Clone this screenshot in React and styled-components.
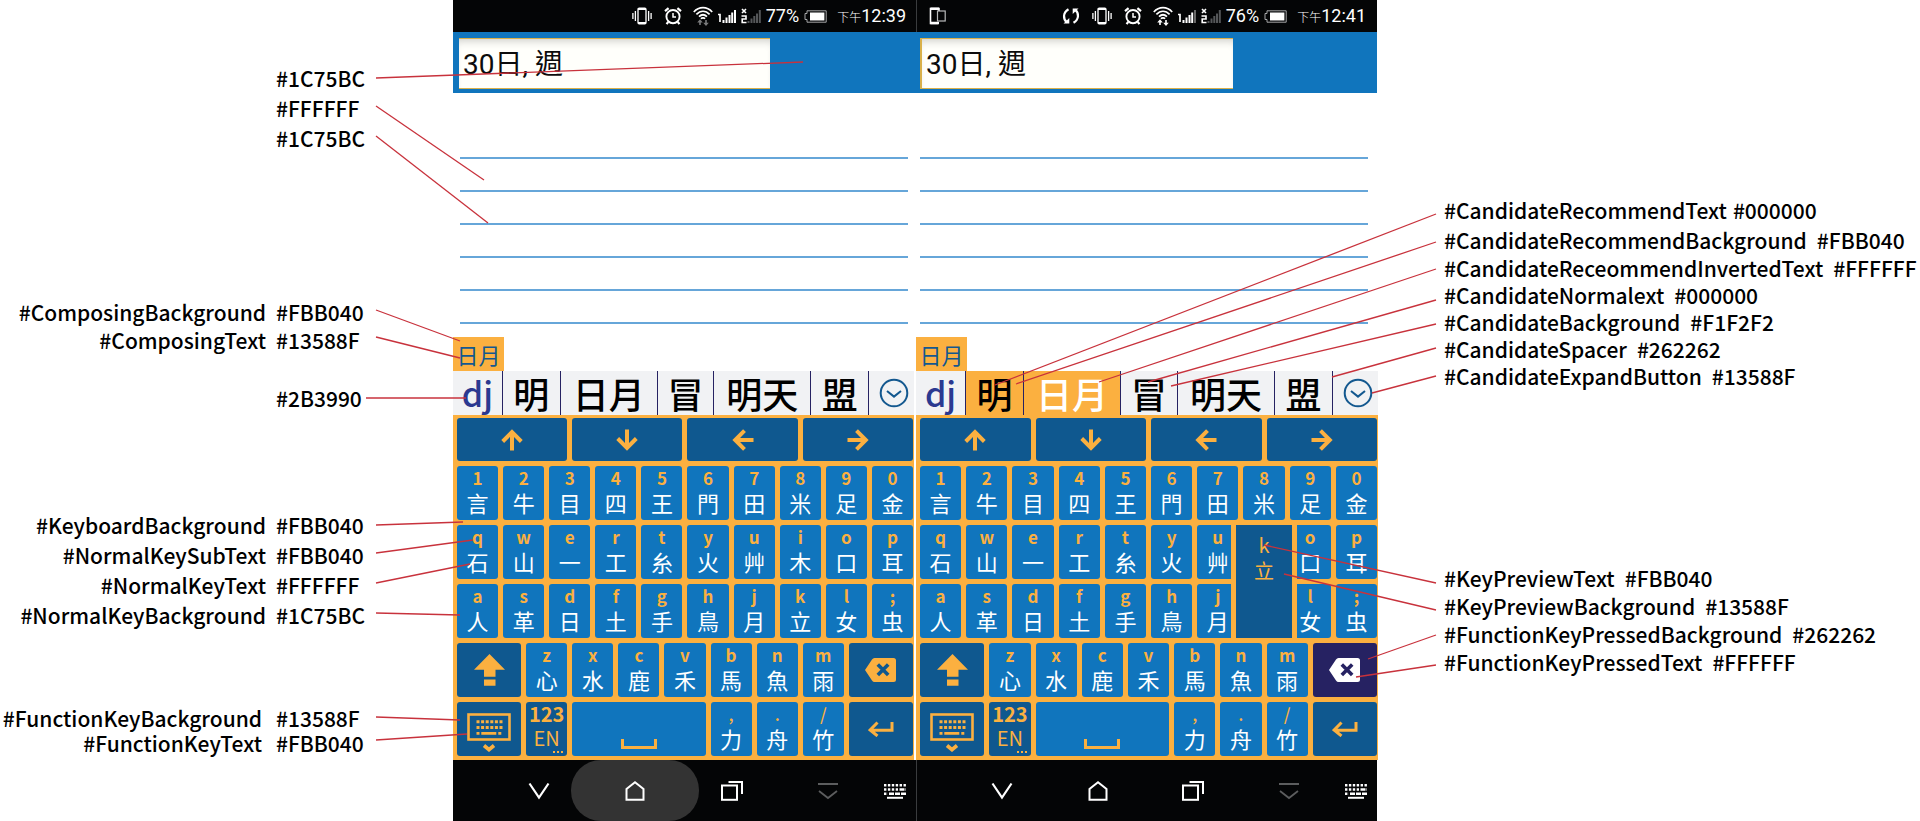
import React from "react";
import styled, { createGlobalStyle, css } from "styled-components";

const c = {
  amber: "#FBB040",
  blue: "#1075BD",
  navy: "#0F588F",
  ink: "#2B3990",
  pressed: "#262262",
  bar: "#F1F2F4",
  nav: "#040506",
};

const latin = '"Noto Sans CJK TC", "Noto Sans", sans-serif';
const android = 'Roboto, "Noto Sans CJK TC", sans-serif';

const GlobalStyle = createGlobalStyle`
  *, *::before, *::after { box-sizing: border-box; }
  body { margin: 0; background: #fff; font-family: ${latin}; }
  button, input { margin: 0; padding: 0; border: 0; font: inherit; color: inherit; background: none; }
  button { cursor: pointer; }
  svg { display: block; flex: none; }
`;

const Page = styled.main`
  position: relative;
  display: grid;
  grid-template-columns: minmax(0, 453fr) minmax(0, 463fr) minmax(0, 462fr) minmax(0, 542fr);
  overflow: hidden;
`;

/* ---------- annotations ---------- */

const Notes = styled.section`
  padding: ${(p) => (p.$side === "left" ? "63px 87px 0 0" : "195px 0 0 66px")};
  font-size: 21px;
  font-weight: 500;
  color: #000;
  white-space: nowrap;
`;

const NoteGroup = styled.div`
  margin-top: ${(p) => p.$space || 0}px;
`;

const Note = styled.div`
  display: flex;
  gap: ${(p) => p.$gap || 10}px;
  justify-content: ${(p) => (p.$side === "left" ? "flex-end" : "flex-start")};
  line-height: ${(p) => p.$pitch}px;
`;

const NoteValue = styled.span`
  ${(p) => p.$side === "left" && css`width: 90px;`}
`;

const Leaders = styled.svg`
  position: absolute;
  inset: 0;
  width: 100%;
  height: 100%;
  pointer-events: none;
  z-index: 5;

  line {
    stroke: #c8323c;
    stroke-width: 1.3;
    vector-effect: non-scaling-stroke;
  }
`;

const leftNotes = [
  { space: 0, pitch: 30, rows: [["", "#1C75BC"], ["", "#FFFFFF"], ["", "#1C75BC"]] },
  { space: 145, pitch: 28, rows: [["#ComposingBackground", "#FBB040"], ["#ComposingText", "#13588F"]] },
  { space: 30, pitch: 28, rows: [["", "#2B3990"]] },
  {
    space: 98,
    pitch: 30,
    rows: [
      ["#KeyboardBackground", "#FBB040"],
      ["#NormalKeySubText", "#FBB040"],
      ["#NormalKeyText", "#FFFFFF"],
      ["#NormalKeyBackground", "#1C75BC"],
    ],
  },
  {
    space: 76,
    pitch: 25,
    gap: 14,
    rows: [["#FunctionKeyBackground", "#13588F"], ["#FunctionKeyText", "#FBB040"]],
  },
];

const rightNotes = [
  { space: 0, pitch: 30, gap: 6, rows: [["#CandidateRecommendText", "#000000"]] },
  { space: 0, pitch: 30, rows: [["#CandidateRecommendBackground", "#FBB040"]] },
  {
    space: 0,
    pitch: 27,
    rows: [
      ["#CandidateReceommendInvertedText", "#FFFFFF"],
      ["#CandidateNormalext", "#000000"],
      ["#CandidateBackground", "#F1F2F2"],
      ["#CandidateSpacer", "#262262"],
      ["#CandidateExpandButton", "#13588F"],
    ],
  },
  {
    space: 174,
    pitch: 28,
    rows: [
      ["#KeyPreviewText", "#FBB040"],
      ["#KeyPreviewBackground", "#13588F"],
      ["#FunctionKeyPressedBackground", "#262262"],
      ["#FunctionKeyPressedText", "#FFFFFF"],
    ],
  },
];

const leaders = [
  [376, 78, 803, 62],
  [376, 106, 484, 180],
  [376, 136, 488, 223],
  [376, 310, 460, 341],
  [376, 337, 460, 358],
  [366, 398, 466, 398],
  [376, 525, 463, 522],
  [376, 553, 473, 540],
  [376, 583, 470, 564],
  [376, 613, 460, 615],
  [376, 717, 460, 720],
  [376, 740, 467, 734],
  [1436, 214, 995, 385],
  [1436, 242, 1016, 384],
  [1436, 269, 1099, 382],
  [1436, 300, 1148, 382],
  [1436, 324, 1171, 386],
  [1436, 348, 1332, 377],
  [1436, 376, 1372, 393],
  [1436, 583, 1264, 545],
  [1436, 610, 1284, 574],
  [1436, 635, 1368, 659],
  [1436, 665, 1356, 677],
];

function NoteColumn({ side, groups }) {
  return (
    <Notes $side={side}>
      {groups.map((g, i) => (
        <NoteGroup key={i} $space={g.space}>
          {g.rows.map(([name, value], j) => (
            <Note key={j} $side={side} $pitch={g.pitch} $gap={g.gap}>
              {name && <span>{name}</span>}
              <NoteValue $side={side}>{value}</NoteValue>
            </Note>
          ))}
        </NoteGroup>
      ))}
    </Notes>
  );
}

/* ---------- phone ---------- */

const Phone = styled.section`
  display: flex;
  flex-direction: column;
  min-width: 0;
`;

const StatusBar = styled.div`
  display: flex;
  align-items: center;
  height: 32px;
  padding: 0 ${(p) => (p.$second ? 11 : 10)}px 0 12px;
  margin-right: ${(p) => (p.$second ? 1 : 0)}px;
  border-left: 1px solid ${(p) => (p.$second ? "#3a3c3e" : c.nav)};
  background: ${c.nav};
  color: #fff;
  font-family: ${android};
  font-size: 18px;
  line-height: 32px;
`;

const StatusIcons = styled.div`
  display: flex;
  align-items: center;
  gap: 12px;
  margin-left: auto;
`;

const StatusSignals = styled.div`
  display: flex;
  align-items: center;
  gap: 5px;
  margin: 0 10px 0 11px;
`;

const Meridiem = styled.span`
  font-size: 12px;
  font-weight: 300;
  padding-top: 3px;
`;

const TitleBar = styled.header`
  height: 61px;
  margin-right: ${(p) => (p.$second ? 1 : 0)}px;
  padding: 6px ${(p) => (p.$second ? 4 : 6)}px;
  background: ${c.blue};
`;

const TitleInput = styled.input`
  display: block;
  width: 69%;
  height: 51px;
  && {
    padding: 0 0 4px 4px;
    background: #fffffb;
    border: solid #d9b04a;
    border-width: 1px 0 1px ${(p) => (p.$second ? 2 : 0)}px;
    box-shadow: inset 0 7px 8px -5px rgba(0, 0, 0, 0.2);
    font-family: ${android};
    font-size: 28px;
    color: #0c0c0c;
  }
`;

const Paper = styled.div`
  padding: 33px 8px 13px ${(p) => (p.$second ? 4 : 7)}px;
  margin-right: ${(p) => (p.$second ? 2 : 0)}px;
`;

const Rule = styled.div`
  height: 33px;
  border-bottom: 2px solid #66a6d9;
`;

const Composing = styled.div`
  width: 51px;
  height: 34px;
  background: ${c.amber};
  color: #13588f;
  font-size: 22px;
  line-height: 34px;
  text-align: center;
`;

const InputArea = styled.div`
  border-right: ${(p) => (p.$second ? 0 : 2)}px solid #fff;
`;

const Candidates = styled.div`
  display: grid;
  grid-template-columns: 50fr 58fr 97fr 57fr 97fr 58fr 45fr;
  height: 44px;
  background: ${c.bar};
`;

const Candidate = styled.button`
  && {
    display: flex;
    align-items: center;
    justify-content: center;
    min-width: 0;
    height: 44px;
    padding-left: ${(p) => (p.$last ? 4 : 0)}px;
    border-right: ${(p) => (p.$last ? 0 : 1)}px solid ${c.pressed};
    background: ${(p) => (p.$active ? c.amber : "transparent")};
    color: ${(p) => p.$color || "#000"};
    font-size: ${(p) => (p.$typed ? 34 : 36)}px;
    font-weight: 500;
    line-height: 44px;
    white-space: nowrap;
  }
`;

const Keyboard = styled.div`
  display: grid;
  grid-template-columns: repeat(20, minmax(0, 1fr));
  grid-template-rows: 43px repeat(5, 54px);
  gap: 5px;
  padding: 3px 1px 4px 4px;
  background: ${c.amber};
`;

const Key = styled.button`
  && {
    display: flex;
    flex-direction: column;
    align-items: center;
    justify-content: ${(p) => (p.$low ? "flex-end" : p.$text ? "flex-start" : "center")};
    grid-column: span ${(p) => p.$span || 2};
    padding: ${(p) => (p.$text ? "1px 0 0" : p.$low ? "0 0 7px" : "0")};
    border-radius: 3px;
    background: ${(p) => (p.$pressed ? c.pressed : p.$fn ? c.navy : c.blue)};
    color: ${(p) => (p.$pressed ? "#fff" : c.amber)};
  }
`;

const SubText = styled.span`
  font-size: 17px;
  line-height: 22px;
  font-weight: ${(p) => (p.$light ? 500 : 700)};
`;

const MainText = styled.span`
  font-size: 22px;
  line-height: 26px;
  color: #fff;
`;

const ModeNumber = styled.span`
  font-size: 20px;
  line-height: 22px;
  font-weight: 700;
`;

const ModeName = styled.span`
  font-size: 20px;
  line-height: 26px;
`;

const ModeDots = styled.svg`
  align-self: flex-end;
  margin-right: 4px;
`;

const Preview = styled.div`
  grid-column: 15 / span 2;
  grid-row: 3 / span 2;
  z-index: 2;
  display: flex;
  flex-direction: column;
  align-items: center;
  margin: -5px -12px;
  padding-top: 7px;
  border: 5px solid ${c.amber};
  background: ${c.navy};
  color: ${c.amber};
  font-size: 20px;
  line-height: 26px;
`;

const NavBar = styled.nav`
  display: grid;
  grid-template-columns: repeat(4, 96fr) 38fr;
  height: 61px;
  margin-right: ${(p) => (p.$second ? 1 : 0)}px;
  padding-left: 37px;
  padding-right: 2px;
  border-left: 1px solid ${(p) => (p.$second ? "#3a3c3e" : c.nav)};
  background: ${c.nav};
  overflow: hidden;
`;

const NavButton = styled.button`
  && {
    position: relative;
    display: flex;
    align-items: center;
    justify-content: center;
    color: ${(p) => (p.$dim ? "#5c5d5e" : "#fff")};
  }
  &::before {
    content: "";
    display: ${(p) => (p.$held ? "block" : "none")};
    position: absolute;
    inset: 0 -16px;
    border-radius: 30px;
    background: #333;
  }
  svg {
    position: relative;
  }
`;

/* ---------- icons ---------- */

const Line = ({ w, h, sw = 2, children, ...rest }) => (
  <svg width={w} height={h} viewBox={`0 0 ${w} ${h}`} fill="none" stroke="currentColor" strokeWidth={sw} {...rest}>
    {children}
  </svg>
);

const VibrateIcon = () => (
  <Line w={20} h={18} sw={1.3}>
    <rect x="6" y="1.2" width="8" height="15.6" rx="1.2" />
    <path d="M6 2h8M6 16h8" strokeWidth="1.8" />
    <path d="M3.4 4v10M.9 6v6M16.6 4v10M19.1 6v6" />
  </Line>
);

const AlarmIcon = () => (
  <Line w={18} h={18} sw={1.9}>
    <circle cx="9" cy="9.6" r="6.6" />
    <path d="M9 6v4h3" strokeWidth="1.5" />
    <path d="M1 4.2 4.6 1.2M17 4.2l-3.6-3M4.2 14.8l-1.6 2.4M13.8 14.8l1.6 2.4" strokeWidth="2.2" />
  </Line>
);

const WifiIcon = ({ active }) => (
  <Line w={20} h={20} sw={1.7}>
    <path d="M.8 6C6 .2 14 .2 19.2 6M3.4 8.4c4-4.2 9.2-4.2 13.2 0M6 10.6c2.6-2.4 5.4-2.4 8 0" />
    <path d="M7.8 12.6q2.2-1.6 4.4 0" />
    <g stroke={active ? "#fff" : "#7a7b7c"} fill={active ? "#fff" : "#7a7b7c"}>
      <path d="M7 19v-4M13 14v4" strokeWidth="1.6" />
      <path d="M4.2 16.5 7 13.2l2.800 3.300zM10.200 16.700 13 20l2.800-3.300z" stroke="none" />
    </g>
  </Line>
);

const SignalIcon = ({ full }) => (
  <Line w={18} h={14} sw={2}>
    <path d="M0 5.5h2V13" strokeWidth="1.7" />
    <path d="M5.5 14v-3M8.5 14V8.5M11.5 14V6M14.2 14V3.5" />
    <path d="M17 14V1" stroke={full ? "#fff" : "#666"} />
  </Line>
);

const NoSignalIcon = () => (
  <Line w={20} h={16} sw={2}>
    <path d="M1 1l4 4M5 1 1 5" strokeWidth="1.6" />
    <path d="M.5 8H5v3H1.2v3.5H5.5" strokeWidth="1.6" />
    <path d="M7.5 15v-2M10.5 15v-4.5M13.3 15V8M16 15V5.5M18.8 15V2" stroke="#555759" />
  </Line>
);

const BatteryIcon = () => (
  <Line w={23} h={13} sw={1}>
    <path d="M3 .8h19.2v11.4H3V9.5H1v-6h2z" stroke="#a5a6a7" />
    <rect x="6" y="2.500" width="14.4" height="8" fill="#fff" stroke="none" />
  </Line>
);

const SyncIcon = () => (
  <Line w={18} h={18} sw={2.2}>
    <path d="M6.5 2.2C.8 5.500.8 12 5 15.3M11.5 15.8C17.2 12.5 17.2 6 13 2.7" />
    <path d="M1.5 16.5h5.8V11zM16.5 1.5h-5.8V7z" fill="currentColor" stroke="none" />
  </Line>
);

const DevicesIcon = () => (
  <Line w={17} h={18} sw={1.6}>
    <path d="M9 16.5H1.500V1.500h8.500V4" />
    <path d="M1.500 1.800H10M1.500 16H10" strokeWidth="2.600" />
    <rect x="8.500" y="4" width="7.700" height="10" stroke="#b9babb" strokeWidth="1.200" />
  </Line>
);

const ArrowIcon = ({ turn }) => (
  <Line w={22} h={22} sw={4} transform={`rotate(${turn})`}>
    <path d="M11 21.5V3.5M1.7 12.5 11 3.2l9.3 9.3" />
  </Line>
);

const ShiftIcon = () => (
  <svg width="31" height="32" viewBox="0 0 31 32" fill="currentColor">
    <path d="M15.5 0 31 15.7h-9.5v7H10v-7H0zM10 25.5h11.5v6.2H10z" />
  </svg>
);

const BackspaceIcon = ({ hole }) => (
  <svg width="31" height="24" viewBox="0 0 31 24" fill="currentColor">
    <path d="M9.5 0H28.5A2.5 2.5 0 0 1 31 2.5v19a2.5 2.5 0 0 1-2.5 2.5H9.5Q8 24 7 22.5L0 12 7 1.5Q8 0 9.5 0z" />
    <path d="m12.8 6.5 10.4 10.4M23.2 6.5 12.8 16.9" stroke={hole} strokeWidth="3.6" />
  </svg>
);

const LayoutIcon = () => (
  <svg width="44" height="46" viewBox="0 -7 44 46" fill="none" stroke="currentColor">
    <rect x="1.5" y="1.5" width="41" height="25" strokeWidth="2.6" />
    <path d="M9.5 8.7h26M9.5 14.5h26" strokeWidth="3" strokeDasharray="3 1.6" />
    <path d="M9.5 20.3h3M14.3 20.3h15M31.3 20.3h3" strokeWidth="2.8" />
    <path d="m17 32.5 5 4.2 5-4.2" strokeWidth="3.6" />
  </svg>
);

const SpaceIcon = () => (
  <Line w={36} h={10} sw={3}>
    <path d="M1.5 0v8.5h33V0" />
  </Line>
);

const EnterIcon = () => (
  <Line w={26} h={16} sw={3}>
    <path d="M24 1v8.2H3M9.5 1.5 2.2 9l7.3 6" />
  </Line>
);

const ExpandIcon = () => (
  <Line w={30} h={30} sw={2}>
    <circle cx="15" cy="15" r="13.3" />
    <path d="m8 13 7 5.6 7-5.6" />
  </Line>
);

const HideIcon = () => (
  <Line w={22} h={18} sw={2.2}>
    <path d="m1.5 1.5 9.5 14 9.5-14" />
  </Line>
);

const HomeIcon = () => (
  <Line w={20} h={20} sw={2}>
    <path d="M1.5 18.7V8L10 1.3 18.5 8v10.7z" />
  </Line>
);

const RecentsIcon = () => (
  <Line w={22} h={20} sw={2}>
    <rect x="1" y="4.5" width="15" height="14.3" />
    <path d="M7.5 1H21v12" />
  </Line>
);

const CollapseIcon = () => (
  <Line w={22} h={18} sw={1.8}>
    <path d="M1 2h20M2 9l9 7 9-7" />
  </Line>
);

const NavKeyboardIcon = () => (
  <Line w={22} h={16} sw={2.4}>
    <path d="M0 2.2h22M0 6.5h14M0 10.7h4" strokeDasharray="2.4 1.5" />
    <path d="M15.5 6.5H22M5 10.7h17" strokeDasharray="5 1" />
    <path d="M3 14.8h16" strokeWidth="2" />
  </Line>
);

/* ---------- keyboard data ---------- */

const letterRows = [
  ["1言", "2牛", "3目", "4四", "5王", "6門", "7田", "8米", "9足", "0金"],
  ["q石", "w山", "e一", "r工", "t糸", "y火", "u艸", "i木", "o口", "p耳"],
  ["a人", "s革", "d日", "f土", "g手", "h鳥", "j月", "k立", "l女", ";虫"],
];
const shiftRow = ["z心", "x水", "c鹿", "v禾", "b馬", "n魚", "m雨"];
const punctuation = [",力", ".舟", "/竹"];

const LetterKey = ({ label, light }) => (
  <Key type="button" $text>
    <SubText $light={light}>{label[0]}</SubText>
    <MainText>{label[1]}</MainText>
  </Key>
);

function Keys({ second }) {
  const covered = second ? ["i", "k"] : [];
  return (
    <Keyboard>
      {[["Up", 0], ["Down", 180], ["Left", -90], ["Right", 90]].map(([name, turn]) => (
        <Key key={name} type="button" aria-label={name} $span={5} $fn>
          <ArrowIcon turn={turn} />
        </Key>
      ))}
      {second && (
        <Preview>
          <span>k</span>
          <span>立</span>
        </Preview>
      )}
      {letterRows.flat().filter((k) => !covered.includes(k[0])).map((k) => (
        <LetterKey key={k} label={k} />
      ))}
      <Key type="button" aria-label="Shift" $span={3} $fn>
        <ShiftIcon />
      </Key>
      {shiftRow.map((k) => (
        <LetterKey key={k} label={k} />
      ))}
      <Key type="button" aria-label="Delete" $span={3} $fn $pressed={second}>
        <BackspaceIcon hole={second ? c.pressed : c.navy} />
      </Key>
      <Key type="button" aria-label="Keyboard layout" $span={3} $fn>
        <LayoutIcon />
      </Key>
      <Key type="button" $text $fn>
        <ModeNumber>123</ModeNumber>
        <ModeName>EN</ModeName>
        <ModeDots width="10" height="3" viewBox="0 0 10 3" fill="currentColor">
          <path d="M0 0h2v2H0zM4 0h2v2H4zM8 0h2v2H8z" />
        </ModeDots>
      </Key>
      <Key type="button" aria-label="Space" $span={6} $low>
        <SpaceIcon />
      </Key>
      {punctuation.map((k) => (
        <LetterKey key={k} label={k} light />
      ))}
      <Key type="button" aria-label="Enter" $span={3} $fn>
        <EnterIcon />
      </Key>
    </Keyboard>
  );
}

const candidates = ["明", "日月", "冒", "明天", "盟"];

function PhoneScreen({ second, battery, time }) {
  return (
    <Phone>
      <StatusBar $second={second}>
        {second && <DevicesIcon />}
        <StatusIcons>
          {second && <SyncIcon />}
          <VibrateIcon />
          <AlarmIcon />
        </StatusIcons>
        <StatusSignals>
          <WifiIcon active={second} />
          <SignalIcon full={!second} />
          <NoSignalIcon />
          <span>{battery}</span>
          <BatteryIcon />
        </StatusSignals>
        <Meridiem>下午</Meridiem>
        <span>{time}</span>
      </StatusBar>
      <TitleBar $second={second}>
        <TitleInput $second={second} aria-label="Title" defaultValue="30日, 週" />
      </TitleBar>
      <Paper $second={second}>
        {Array.from({ length: 6 }, (_, i) => (
          <Rule key={i} />
        ))}
      </Paper>
      <InputArea $second={second}>
        <Composing>日月</Composing>
        <Candidates>
          <Candidate type="button" $color={c.ink} $typed>dj</Candidate>
          {candidates.map((word, i) => (
            <Candidate
              key={word}
              type="button"
              $active={second && i < 2}
              $color={second && i === 1 ? "#fff" : "#000"}
            >
              {word}
            </Candidate>
          ))}
          <Candidate type="button" aria-label="More candidates" $color="#13588F" $last>
            <ExpandIcon />
          </Candidate>
        </Candidates>
        <Keys second={second} />
      </InputArea>
      <NavBar $second={second}>
        <NavButton type="button" aria-label="Hide keyboard"><HideIcon /></NavButton>
        <NavButton type="button" aria-label="Home" $held={!second}><HomeIcon /></NavButton>
        <NavButton type="button" aria-label="Recent apps"><RecentsIcon /></NavButton>
        <NavButton type="button" aria-label="Collapse" $dim><CollapseIcon /></NavButton>
        <NavButton type="button" aria-label="Choose keyboard"><NavKeyboardIcon /></NavButton>
      </NavBar>
    </Phone>
  );
}

export default function App() {
  return (
    <>
      <GlobalStyle />
      <Page>
        <NoteColumn side="left" groups={leftNotes} />
        <PhoneScreen battery="77%" time="12:39" />
        <PhoneScreen second battery="76%" time="12:41" />
        <NoteColumn side="right" groups={rightNotes} />
        <Leaders viewBox="0 0 1920 821" preserveAspectRatio="none" aria-hidden="true">
          {leaders.map(([x1, y1, x2, y2], i) => (
            <line key={i} x1={x1} y1={y1} x2={x2} y2={y2} />
          ))}
        </Leaders>
      </Page>
    </>
  );
}
